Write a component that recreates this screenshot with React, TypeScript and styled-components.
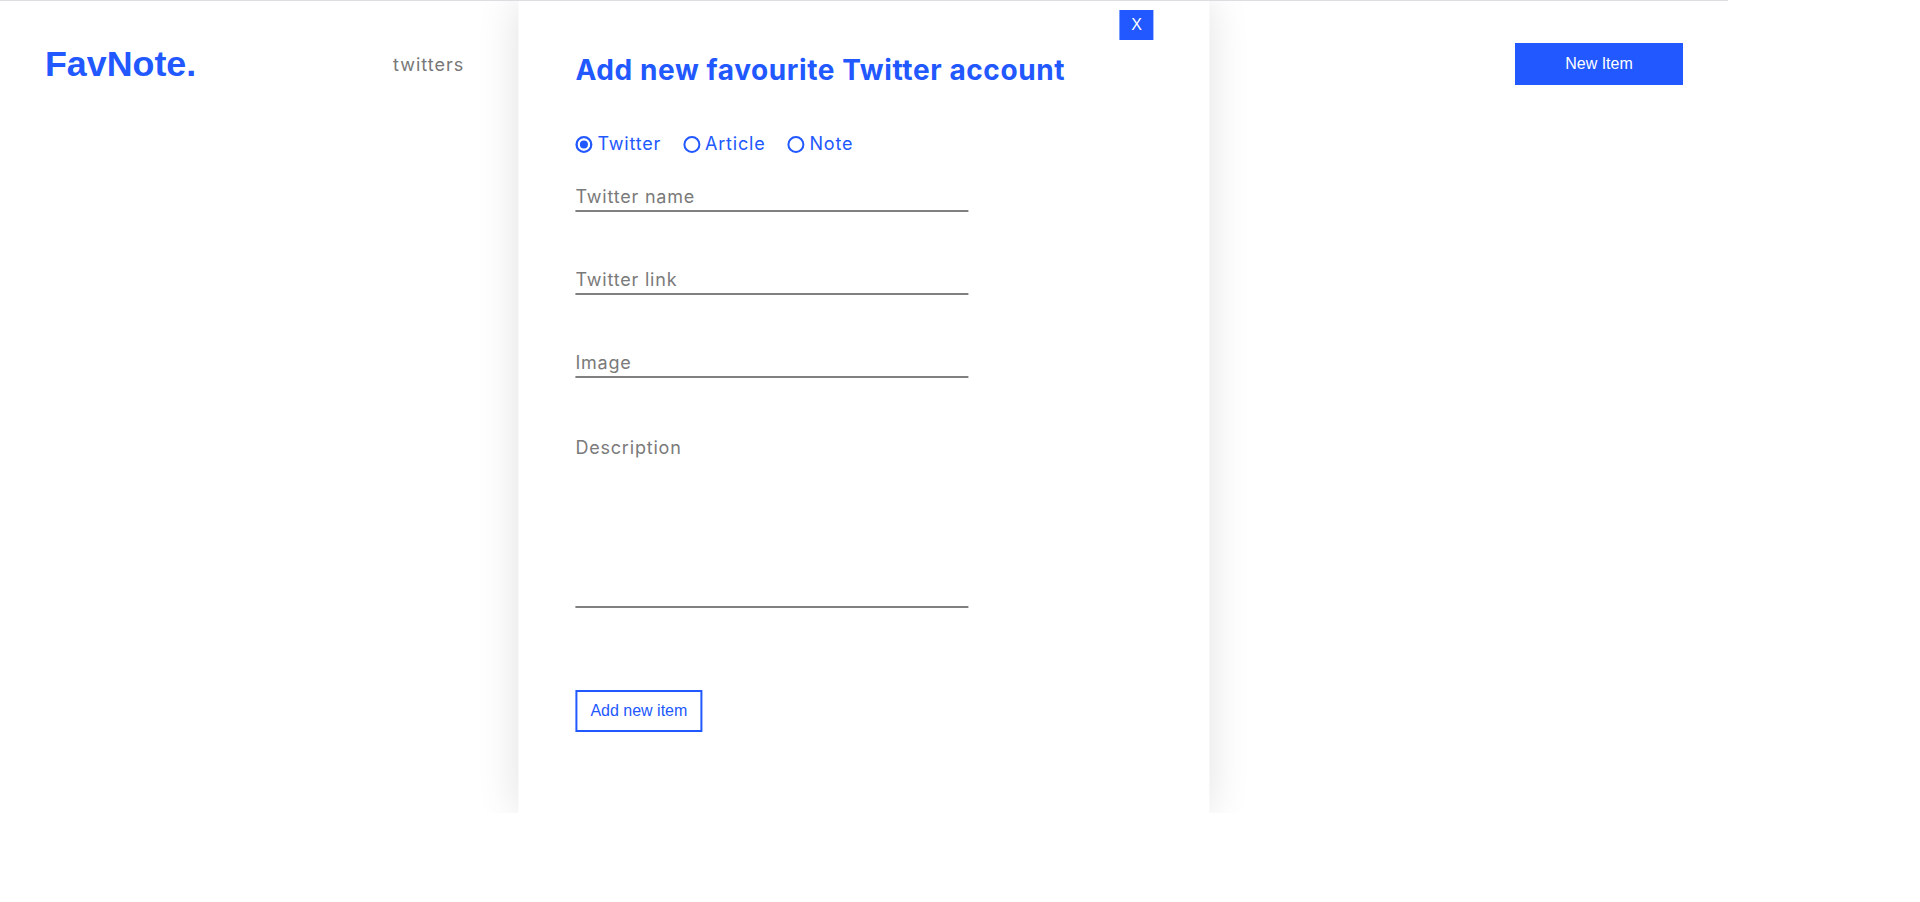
import React from "react";
import styled, { createGlobalStyle } from "styled-components";

const BLUE = "#2158ff";

const GlobalStyle = createGlobalStyle`
  html, body {
    margin: 0;
    padding: 0;
    background: #ffffff;
  }
  body {
    font-family: Inter, "Open Sans", sans-serif;
  }
`;

const Page = styled.div`
  position: relative;
  width: 90%;
  min-height: 860px;
  border-top: 1px solid #dcdde1;
`;

const Header = styled.header`
  display: flex;
  align-items: center;
  height: 42px;
  padding: 42px 45px 0;
`;

const Logo = styled.h1`
  margin: 0;
  width: 348px;
  flex-shrink: 0;
  font-family: "Liberation Sans", Arial, sans-serif;
  font-weight: 700;
  font-size: 35.8px;
  color: ${BLUE};
`;

const Nav = styled.nav`
  flex: 1;
  display: flex;
  align-items: center;
`;

const NavLink = styled.a`
  font-family: Inter, sans-serif;
  font-size: 18px;
  letter-spacing: 1px;
  color: #777777;
  text-decoration: none;
`;

const NewItemButton = styled.button`
  width: 168px;
  height: 42px;
  border: none;
  background: ${BLUE};
  color: #ffffff;
  font-family: "Liberation Sans", Arial, sans-serif;
  font-size: 16px;
  cursor: pointer;
`;

const Modal = styled.div`
  position: absolute;
  top: 0;
  left: 50%;
  transform: translateX(-50%);
  width: 40%;
  height: 812px;
  box-sizing: border-box;
  padding: 52px 57px;
  background: #ffffff;
  box-shadow: 0 0 40px rgba(0, 0, 0, 0.12);
  clip-path: inset(0 -80px 0 -80px);
  display: flex;
  flex-direction: column;
`;

const CloseButton = styled.button`
  position: absolute;
  top: 9px;
  right: 56px;
  width: 34px;
  height: 30px;
  padding: 0;
  border: none;
  background: ${BLUE};
  color: #ffffff;
  font-family: "Liberation Sans", Arial, sans-serif;
  font-size: 16px;
  cursor: pointer;
`;

const Title = styled.h2`
  margin: 0;
  font-family: Inter, sans-serif;
  font-weight: 700;
  font-size: 28px;
  line-height: 34px;
  letter-spacing: 0.6px;
  color: ${BLUE};
`;

const RadioGroup = styled.div`
  display: flex;
  align-items: center;
  gap: 22px;
  margin-top: 46px;
`;

const RadioOption = styled.label`
  display: flex;
  align-items: center;
  gap: 5px;
  font-family: Inter, sans-serif;
  font-size: 18px;
  line-height: 22px;
  letter-spacing: 0.8px;
  color: ${BLUE};
  cursor: pointer;
`;

const RadioInput = styled.input`
  appearance: none;
  margin: 0;
  width: 17px;
  height: 17px;
  box-sizing: border-box;
  border: 2px solid ${BLUE};
  border-radius: 50%;
  background: #ffffff;
  &:checked {
    background: ${BLUE};
    box-shadow: inset 0 0 0 2.5px #ffffff;
  }
`;

const Fields = styled.div`
  display: flex;
  flex-direction: column;
  gap: 50.5px;
  margin-top: 24px;
`;

const fieldBase = `
  width: 393px;
  box-sizing: border-box;
  border: none;
  border-bottom: 2px solid #808080;
  background: transparent;
  font-family: Inter, sans-serif;
  font-size: 18px;
  line-height: 20.5px;
  letter-spacing: 0.8px;
  color: #444444;
  outline: none;
  &::placeholder {
    color: #7a7a7a;
  }
`;

const TextInput = styled.input`
  ${fieldBase}
  padding: 8px 0 2px;
`;

const TextArea = styled.textarea`
  ${fieldBase}
  height: 180px;
  padding: 10px 0;
  resize: none;
`;

const SubmitButton = styled.button`
  align-self: flex-start;
  margin-top: 82px;
  padding: 10px 13px;
  border: 2px solid ${BLUE};
  background: #ffffff;
  color: ${BLUE};
  font-family: "Liberation Sans", Arial, sans-serif;
  font-size: 16px;
  line-height: 18px;
  cursor: pointer;
`;

const types = ["Twitter", "Article", "Note"];

export default function App() {
  const [type, setType] = React.useState("Twitter");
  return (
    <>
      <GlobalStyle />
      <Page>
        <Header>
          <Logo>FavNote.</Logo>
          <Nav>
            <NavLink href="#">twitters</NavLink>
          </Nav>
          <NewItemButton>New Item</NewItemButton>
        </Header>
        <Modal>
          <CloseButton>X</CloseButton>
          <Title>Add new favourite Twitter account</Title>
          <RadioGroup>
            {types.map((t) => (
              <RadioOption key={t}>
                <RadioInput
                  type="radio"
                  name="type"
                  checked={type === t}
                  onChange={() => setType(t)}
                />
                {t}
              </RadioOption>
            ))}
          </RadioGroup>
          <Fields>
            <TextInput placeholder="Twitter name" />
            <TextInput placeholder="Twitter link" />
            <TextInput placeholder="Image" />
            <TextArea placeholder="Description" />
          </Fields>
          <SubmitButton>Add new item</SubmitButton>
        </Modal>
      </Page>
    </>
  );
}
